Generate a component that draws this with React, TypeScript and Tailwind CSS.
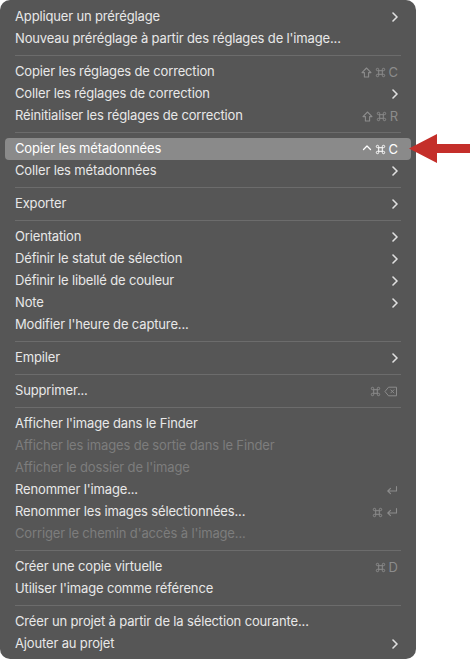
import React from "react";

type Item =
  | { sep: true }
  | {
      label: string;
      sub?: boolean;
      keys?: string[];
      off?: boolean;
      active?: boolean;
    };

const items: Item[] = [
  { label: "Appliquer un préréglage", sub: true },
  { label: "Nouveau préréglage à partir des réglages de l'image..." },
  { sep: true },
  { label: "Copier les réglages de correction", keys: ["shift", "cmd", "C"] },
  { label: "Coller les réglages de correction", sub: true },
  { label: "Réinitialiser les réglages de correction", keys: ["shift", "cmd", "R"] },
  { sep: true },
  { label: "Copier les métadonnées", keys: ["ctrl", "cmd", "C"], active: true },
  { label: "Coller les métadonnées", sub: true },
  { sep: true },
  { label: "Exporter", sub: true },
  { sep: true },
  { label: "Orientation", sub: true },
  { label: "Définir le statut de sélection", sub: true },
  { label: "Définir le libellé de couleur", sub: true },
  { label: "Note", sub: true },
  { label: "Modifier l'heure de capture..." },
  { sep: true },
  { label: "Empiler", sub: true },
  { sep: true },
  { label: "Supprimer...", keys: ["cmd", "del"] },
  { sep: true },
  { label: "Afficher l'image dans le Finder" },
  { label: "Afficher les images de sortie dans le Finder", off: true },
  { label: "Afficher le dossier de l'image", off: true },
  { label: "Renommer l'image...", keys: ["ret"] },
  { label: "Renommer les images sélectionnées...", keys: ["cmd", "ret"] },
  { label: "Corriger le chemin d'accès à l'image...", off: true },
  { sep: true },
  { label: "Créer une copie virtuelle", keys: ["cmd", "D"] },
  { label: "Utiliser l'image comme référence" },
  { sep: true },
  { label: "Créer un projet à partir de la sélection courante..." },
  { label: "Ajouter au projet", sub: true },
];

function Chevron() {
  return (
    <svg width="6" height="10" viewBox="0 0 6 10" fill="none">
      <path d="M1 1l4 4-4 4" stroke="currentColor" strokeWidth="1.6" strokeLinecap="round" strokeLinejoin="round" />
    </svg>
  );
}

function Key({ k }: { k: string }) {
  if (k === "shift")
    return (
      <svg width="11" height="11" viewBox="0 0 11 11" fill="none">
        <path d="M5.5 1L1 5.6h2.4V10h4.2V5.6H10z" stroke="currentColor" strokeWidth="1.1" strokeLinejoin="round" />
      </svg>
    );
  if (k === "cmd")
    return (
      <svg width="11" height="11" viewBox="0 0 11 11" fill="none">
        <path
          d="M3.7 3.7h3.6v3.6H3.7zM3.7 3.7V2.5a1.2 1.2 0 1 0-1.2 1.2h1.2M7.3 3.7V2.5a1.2 1.2 0 1 1 1.2 1.2H7.3M3.7 7.3v1.2a1.2 1.2 0 1 1-1.2-1.2h1.2M7.3 7.3v1.2a1.2 1.2 0 1 0 1.2-1.2H7.3"
          stroke="currentColor"
          strokeWidth="1"
        />
      </svg>
    );
  if (k === "ctrl")
    return (
      <svg width="10" height="11" viewBox="0 0 10 11" fill="none">
        <path d="M1.5 5.5L5 2l3.5 3.5" stroke="currentColor" strokeWidth="1.3" strokeLinecap="round" strokeLinejoin="round" />
      </svg>
    );
  if (k === "del")
    return (
      <svg width="14" height="11" viewBox="0 0 14 11" fill="none">
        <path d="M4.5 1.2h8v8.6h-8L1 5.5z" stroke="currentColor" strokeWidth="1" strokeLinejoin="round" />
        <path d="M6.5 3.6l3.6 3.6M10.1 3.6L6.5 7.2" stroke="currentColor" strokeWidth="1" />
      </svg>
    );
  if (k === "ret")
    return (
      <svg width="12" height="11" viewBox="0 0 12 11" fill="none">
        <path d="M10.5 1.5v4.5H2M4.5 3.4L1.8 6l2.7 2.6" stroke="currentColor" strokeWidth="1.1" strokeLinecap="round" strokeLinejoin="round" />
      </svg>
    );
  return <span className="leading-none">{k}</span>;
}

export default function App() {
  return (
    <div
      className="relative w-[470px] h-[659px] bg-white overflow-hidden"
      style={{ fontFamily: "Inter, 'Liberation Sans', sans-serif" }}
    >
      <div className="w-[416px] h-[659px] bg-[#565656] rounded-[10px] px-[5px] pt-[6px] pb-[4px] flex flex-col">
        {items.map((it, i) =>
          "sep" in it ? (
            <div key={i} className="h-[11px] flex items-center px-[10px]">
              <div className="h-px w-full bg-[#6c6c6c]" />
            </div>
          ) : (
            <div
              key={i}
              className={
                "h-[22px] flex items-center justify-between pl-[10px] pr-[13px] rounded-[4px] text-[13px] tracking-[-0.15px] " +
                (it.active
                  ? "bg-[#8a8a8a] text-white"
                  : it.off
                  ? "text-[#7d7d7d]"
                  : "text-[#e8e8e8]")
              }
            >
              <span className="whitespace-nowrap">{it.label}</span>
              {it.sub && (
                <span className="text-[#e0e0e0]">
                  <Chevron />
                </span>
              )}
              {it.keys && (
                <span
                  className={
                    "flex items-center gap-[3px] text-[13px] tracking-normal " +
                    (it.active ? "text-white" : "text-[#8c8c8c]")
                  }
                >
                  {it.keys.map((k, j) => (
                    <Key key={j} k={k} />
                  ))}
                </span>
              )}
            </div>
          )
        )}
      </div>
      <svg
        className="absolute left-[409px] top-[134px]"
        width="61"
        height="29"
        viewBox="0 0 61 29"
      >
        <path d="M0 14.5L28 0v10h33v9H28v10z" fill="#c42f2a" />
      </svg>
    </div>
  );
}
